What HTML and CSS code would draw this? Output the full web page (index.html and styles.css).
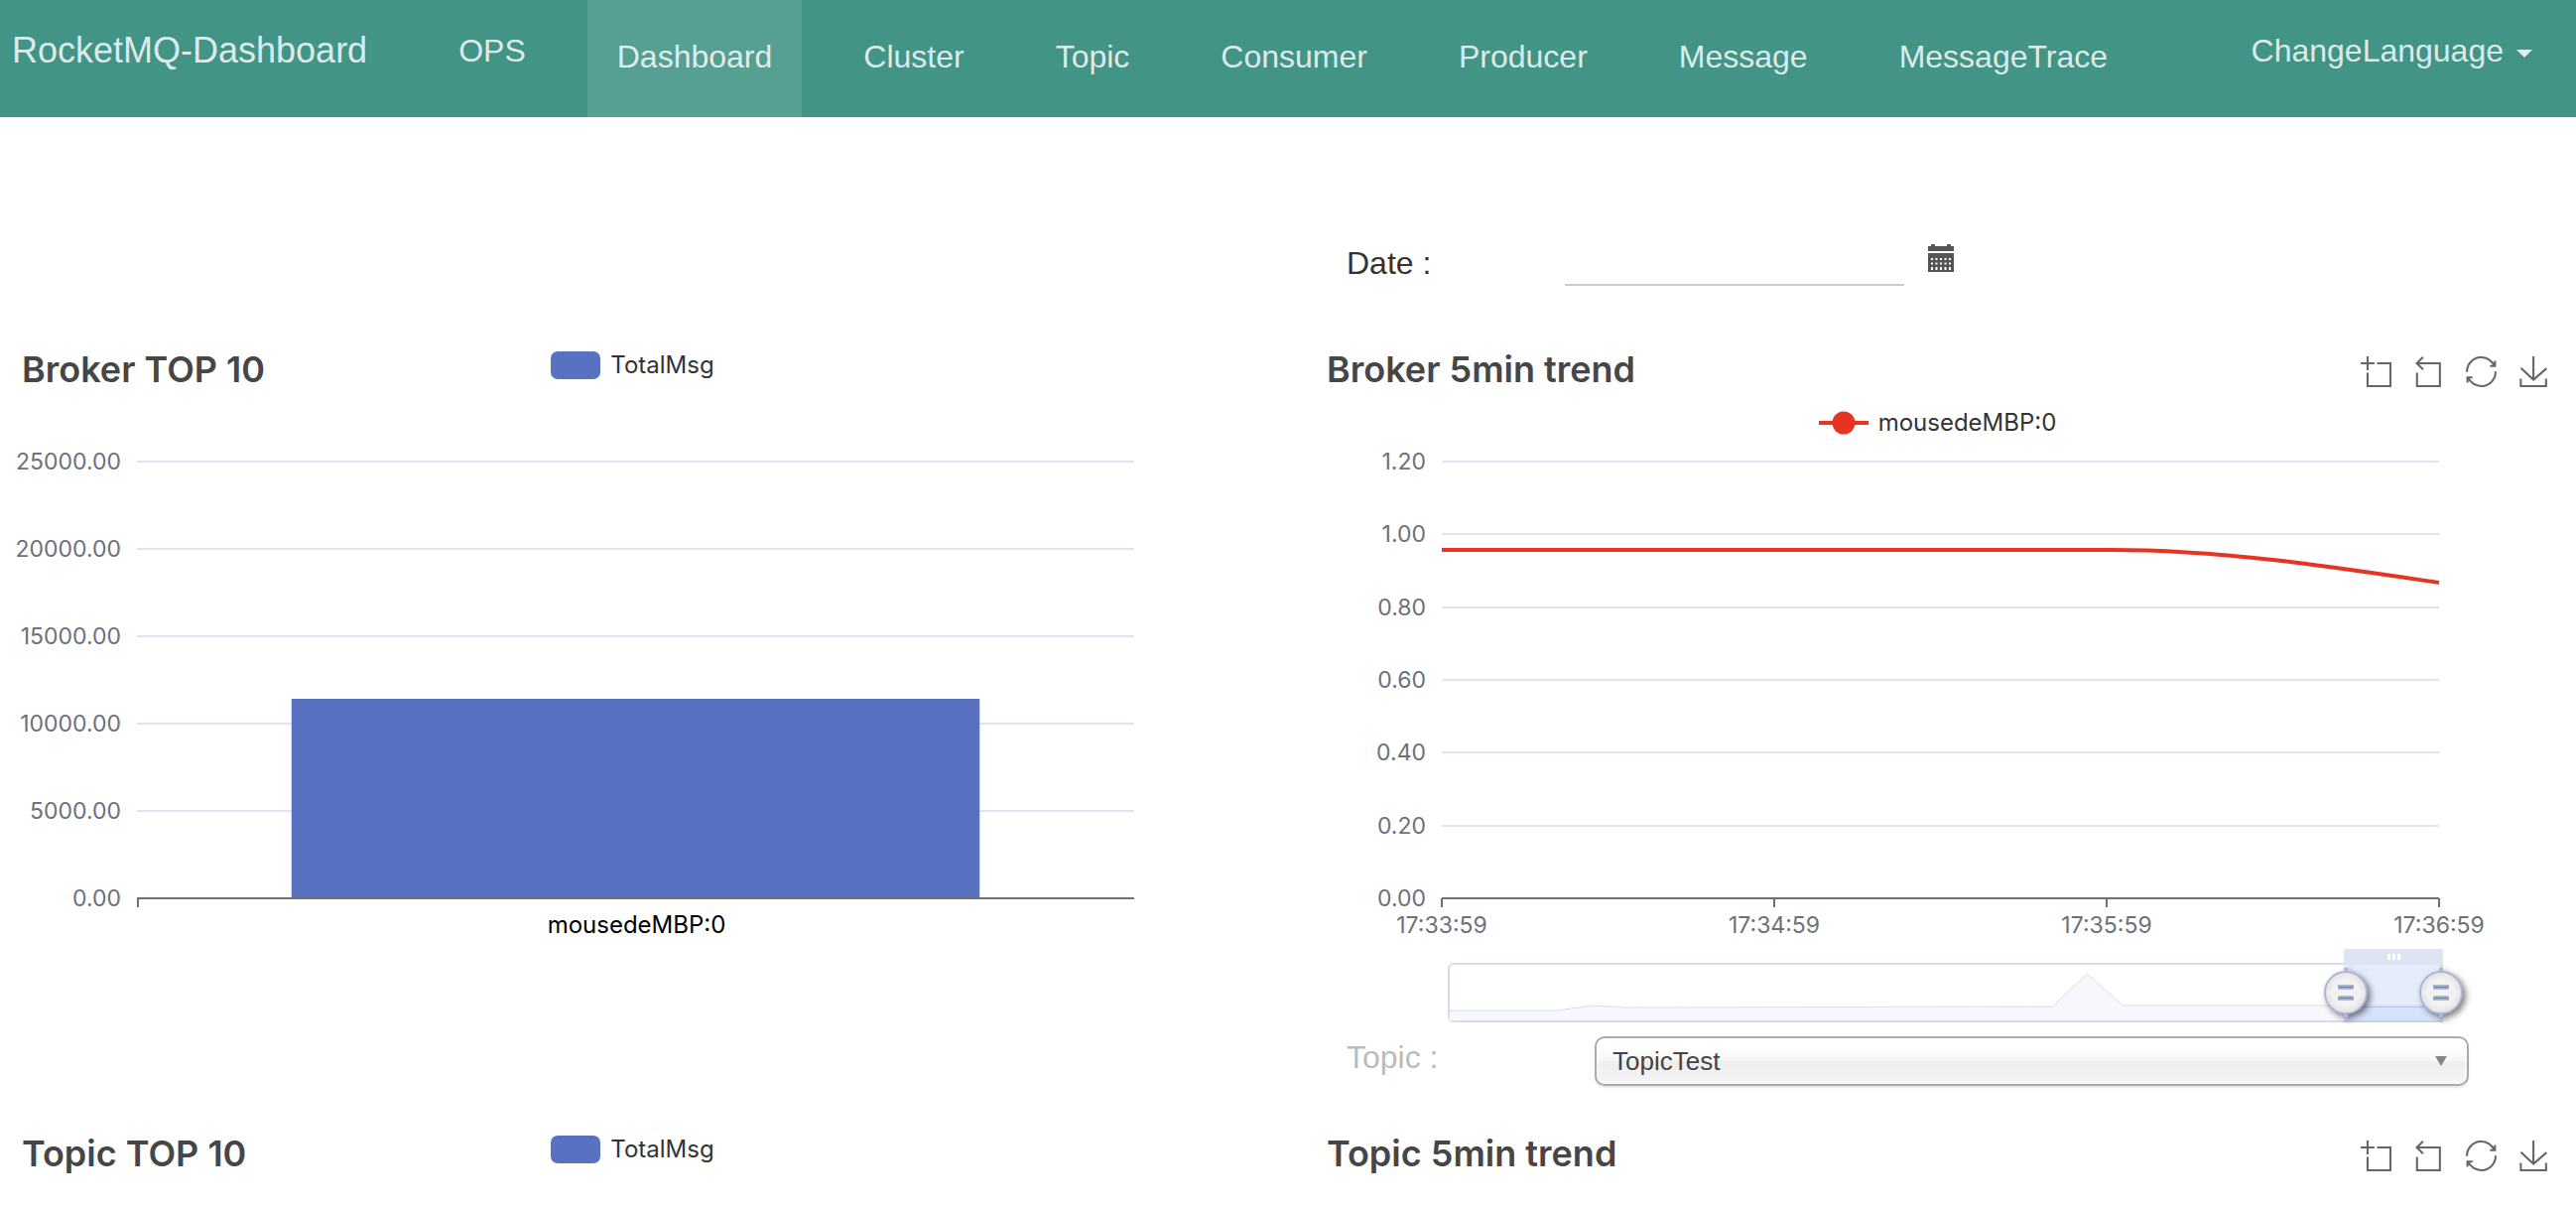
FILE: index.html
```html
<!DOCTYPE html>
<html lang="en">
<head>
<meta charset="utf-8">
<title>RocketMQ-Dashboard</title>
<link rel="stylesheet" href="styles.css">
</head>
<body>
<svg class="sprite" aria-hidden="true">
  <symbol id="tool-zoom" viewBox="0 0 58 58"><path d="M0,13.5h26.9 M13.5,26.9V0 M32.1,13.5H58V58H13.5 V32.1"/></symbol>
  <symbol id="tool-back" viewBox="3 0 58 58"><path d="M22,1.4L9.9,13.5l12.3,12.3 M10.3,13.5H54.9v44.6 H10.3v-26"/></symbol>
  <symbol id="tool-restore" viewBox="0 0 58 58"><path d="M47,18.9h9.8V8.7 M56.3,20.1 C52.1,9,40.5,0.6,26.8,2.1C12.6,3.7,1.6,16.2,2.1,30.6 M13,41.1H3.1v10.2 M3.7,39.9c4.2,11.1,15.8,19.5,29.5,18 c14.2-1.6,25.2-14.1,24.7-28.5"/></symbol>
  <symbol id="tool-save" viewBox="0 0 58 58"><path d="M4.7,22.9L29.3,45.5L54.7,23.4M4.6,43.6L4.6,58L53.8,58L53.8,43.6M29.2,45.1L29.2,0"/></symbol>
</svg>

<nav class="navbar">
  <a class="brand" href="#">RocketMQ-Dashboard</a>
  <a class="ops" href="#">OPS</a>
  <div class="menu">
    <a class="menu-item active" href="#">Dashboard</a>
    <a class="menu-item" href="#">Cluster</a>
    <a class="menu-item" href="#">Topic</a>
    <a class="menu-item" href="#">Consumer</a>
    <a class="menu-item" href="#">Producer</a>
    <a class="menu-item" href="#">Message</a>
    <a class="menu-item" href="#">MessageTrace</a>
  </div>
  <button class="language" type="button">ChangeLanguage<span class="caret"></span></button>
</nav>

<main class="page">
  <div class="field date-field">
    <label class="field-label date-label" for="date">Date :</label>
    <input class="date-input" id="date" type="text">
    <button class="calendar" type="button" aria-label="Open calendar">
      <svg width="26" height="28" viewBox="0 0 26 28" fill="#555">
        <path d="M0 2h3V1a1 1 0 0 1 1-1h2a1 1 0 0 1 1 1v1h12V1a1 1 0 0 1 1-1h2a1 1 0 0 1 1 1v1h3v5H0z"/>
        <path fill-rule="evenodd" d="M0 9h26v19H0z M3 14v2h2v-2z M7.500 14v2h2v-2z M12 14v2h2v-2z M16.500 14v2h2v-2z M21 14v2h2v-2z M3 18.500v2h2v-2z M7.500 18.500v2h2v-2z M12 18.500v2h2v-2z M16.500 18.500v2h2v-2z M21 18.500v2h2v-2z M3 23v3h2v-3z M7.500 23v3h2v-3z M12 23v3h2v-3z M16.500 23v3h2v-3z M21 23v3h2v-3z"/>
      </svg>
    </button>
  </div>

  <section class="chart chart-left">
    <header class="chart-head">
      <h2 class="chart-title">Broker TOP 10</h2>
      <div class="legend"><span class="swatch"></span>TotalMsg</div>
    </header>
    <div class="chart-body">
      <div class="y-axis"><span>25000.00</span><span>20000.00</span><span>15000.00</span><span>10000.00</span><span>5000.00</span><span>0.00</span></div>
      <svg class="plot" viewBox="0 0 1000 440" preserveAspectRatio="none">
        <path class="grid-line" d="M0 0H1000M0 88H1000M0 176H1000M0 264H1000M0 352H1000"/>
        <rect class="bar" x="155" y="239" width="690" height="201"/>
        <path class="axis-line" d="M0 440H1000"/>
      </svg>
    </div>
    <div class="x-axis">
      <span class="tick"></span>
      <span class="category-name">mousedeMBP:0</span>
    </div>
  </section>

  <section class="chart chart-right">
    <header class="chart-head">
      <h2 class="chart-title">Broker 5min trend</h2>
      <div class="toolbox">
        <button type="button" aria-label="Zoom"><svg><use href="#tool-zoom"/></svg></button>
        <button type="button" aria-label="Zoom reset"><svg><use href="#tool-back"/></svg></button>
        <button type="button" aria-label="Restore"><svg><use href="#tool-restore"/></svg></button>
        <button type="button" aria-label="Save as image"><svg><use href="#tool-save"/></svg></button>
      </div>
      <div class="legend legend-below">
        <svg width="50" height="24" viewBox="0 0 50 24"><path d="M0 12H50" stroke="#e83323" stroke-width="4"/><circle cx="25" cy="12" r="11.500" fill="#e83323"/></svg>mousedeMBP:0
      </div>
    </header>
    <div class="chart-body">
      <div class="y-axis"><span>1.20</span><span>1.00</span><span>0.80</span><span>0.60</span><span>0.40</span><span>0.20</span><span>0.00</span></div>
      <svg class="plot" viewBox="0 0 1005 440" preserveAspectRatio="none">
        <path class="grid-line" d="M0 0H1005M0 73H1005M0 147H1005M0 220H1005M0 293H1005M0 367H1005"/>
        <path class="axis-line" d="M0 440H1005"/>
        <path class="trend" d="M0 89H674C787 89 897 106 1005 122"/>
      </svg>
    </div>
    <div class="x-axis">
      <div class="x-label"><span class="tick"></span>17:33:59</div>
      <div class="x-label"><span class="tick"></span>17:34:59</div>
      <div class="x-label"><span class="tick"></span>17:35:59</div>
      <div class="x-label"><span class="tick"></span>17:36:59</div>
    </div>
    <div class="zoom">
      <svg class="zoom-shadow" viewBox="0 0 1000 56" preserveAspectRatio="none">
        <path class="zoom-area" d="M0 46H108L143 41L178 43L608 42L643 9L679 41L1000 41V56H0z"/>
        <path class="zoom-line" d="M0 46H108L143 41L178 43L608 42L643 9L679 41L1000 41"/>
      </svg>
      <div class="zoom-window">
        <div class="zoom-grip"><i></i><i></i><i></i></div>
        <div class="zoom-data"></div>
      </div>
      <input class="zoom-handle" type="range" aria-label="Start of range" min="0" max="1000" value="904">
      <input class="zoom-handle" type="range" aria-label="End of range" min="0" max="1000" value="1000">
    </div>
  </section>

  <div class="field topic-field">
    <label class="field-label topic-label" for="topic">Topic :</label>
    <select class="topic-select" id="topic"><option>TopicTest</option></select>
  </div>

  <section class="chart chart-left">
    <header class="chart-head">
      <h2 class="chart-title">Topic TOP 10</h2>
      <div class="legend"><span class="swatch"></span>TotalMsg</div>
    </header>
  </section>
  <section class="chart chart-right">
    <header class="chart-head">
      <h2 class="chart-title">Topic 5min trend</h2>
      <div class="toolbox">
        <button type="button" aria-label="Zoom"><svg><use href="#tool-zoom"/></svg></button>
        <button type="button" aria-label="Zoom reset"><svg><use href="#tool-back"/></svg></button>
        <button type="button" aria-label="Restore"><svg><use href="#tool-restore"/></svg></button>
        <button type="button" aria-label="Save as image"><svg><use href="#tool-save"/></svg></button>
      </div>
    </header>
  </section>
</main>
</body>
</html>
```
FILE: styles.css
```css
* { box-sizing: border-box; }

body {
  margin: 0;
  background: #fff;
  color: #333;
  font: 24px "Liberation Sans", Arial, sans-serif;
}

button {
  margin: 0;
  padding: 0;
  border: 0;
  background: none;
  color: inherit;
  font: inherit;
}

.sprite { display: none; }

/* Navigation */
.navbar {
  display: flex;
  min-height: 118px;
  padding: 0 44px 0 12px;
  background: #429487;
  color: rgba(255, 255, 255, 0.84);
  font-size: 32px;
  line-height: 102px;
  white-space: nowrap;
}
.navbar a { color: inherit; text-decoration: none; }
.brand { font-size: 36px; }
.ops { margin-left: 92px; }
.menu {
  display: flex;
  gap: 32px;
  margin-left: 62px;
  line-height: 114px;
}
.menu-item { padding: 0 30px; }
.menu-item.active { background: #55a093; }
.language {
  display: flex;
  align-items: center;
  gap: 13px;
  height: 102px;
  margin-left: auto;
}
.caret {
  margin-top: 6px;
  border: 8px solid transparent;
  border-top-color: currentColor;
  border-bottom: 0;
}

/* Page grid: ranking charts on the left, trends on the right */
.page {
  display: grid;
  grid-template-columns: 1fr 1fr;
  column-gap: 64px;
  padding: 126px 16px 0 14px;
}
.chart-left { grid-column: 1; }
.chart-right { grid-column: 2; }

.field {
  grid-column: 2;
  display: flex;
  align-items: flex-start;
  padding-left: 28px;
}
.field-label {
  flex: none;
  font-size: 32px;
  line-height: 42px;
}
.date-field { padding-bottom: 52px; }
.date-label { width: 220px; }
.date-input {
  width: 342px;
  height: 44px;
  padding: 0;
  border: 0;
  border-bottom: 2px solid #ccc;
  background: none;
  font: inherit;
}
.calendar { display: block; margin: 2px 0 0 24px; }
.calendar svg { display: block; }
.topic-field { padding-right: 92px; padding-bottom: 36px; }
.topic-label { width: 250px; color: #bbb; }
.topic-select {
  flex: 1;
  height: 50px;
  padding: 0 16px;
  border: 2px solid #aaa;
  border-radius: 10px;
  appearance: none;
  background:
    url("data:image/svg+xml,%3Csvg xmlns='http://www.w3.org/2000/svg' width='12' height='10'%3E%3Cpath d='M0 0H12L6 10z' fill='%23888'/%3E%3C/svg%3E") no-repeat right 20px center,
    linear-gradient(#fff 20%, #f6f6f6 50%, #eee 52%, #f4f4f4 100%);
  box-shadow: inset 0 0 6px #fff, 0 2px 2px rgba(0, 0, 0, 0.1);
  color: #444;
  font: 26px "Liberation Sans", Arial, sans-serif;
}

/* Charts */
.chart { font: 23px Inter, "Liberation Sans", sans-serif; }
.chart-head {
  display: grid;
  grid-template-columns: 1fr auto 1fr;
  align-items: start;
  align-content: start;
  padding: 12px 12px 0 8px;
}
.chart-title {
  margin: 0;
  color: #464646;
  font-size: 36px;
  font-weight: 600;
  line-height: 40px;
  white-space: nowrap;
}
.legend {
  display: flex;
  align-items: center;
  gap: 10px;
  margin-top: 2px;
  font-size: 24px;
  line-height: 28px;
}
.legend-below {
  grid-column: 1 / -1;
  justify-self: center;
  margin-top: 20px;
}
.swatch {
  width: 50px;
  height: 28px;
  border-radius: 7px;
  background: #5871c0;
}
.toolbox {
  grid-column: 3;
  justify-self: end;
  display: flex;
  gap: 23px;
  margin-top: 7px;
}
.toolbox button, .toolbox svg {
  display: block;
  width: 30px;
  height: 30px;
  overflow: visible;
}
.sprite symbol { overflow: visible; }
.toolbox svg { fill: none; stroke: #666; stroke-width: 4; }

.chart-head:not(:last-child) { min-height: 125px; }
.chart-body {
  display: flex;
  height: 440px;
  padding-right: 122px;
}
.y-axis {
  display: flex;
  flex: none;
  flex-direction: column;
  justify-content: space-between;
  width: 124px;
  padding-right: 16px;
  color: #6e7079;
  line-height: 0;
  text-align: right;
}
.y-axis span { height: 0; }
.plot {
  flex: 1;
  min-width: 0;
  height: 440px;
  overflow: visible;
}
.plot path {
  fill: none;
  stroke-width: 2;
  vector-effect: non-scaling-stroke;
}
.plot .grid-line { stroke: #e0e4ec; }
.plot .axis-line { stroke: #6e7079; }
.plot .trend { stroke: #e83323; stroke-width: 4; }
.bar { fill: #5871c0; }

.x-axis {
  display: flex;
  justify-content: space-between;
  height: 41px;
  padding: 0 122px 0 124px;
  color: #6e7079;
  line-height: 28px;
}
.x-label {
  display: flex;
  flex-direction: column;
  align-items: center;
  width: 0;
  white-space: nowrap;
}
.tick {
  flex: none;
  width: 2px;
  height: 9px;
  margin-bottom: 4px;
  background: #6e7079;
}
.category-name {
  flex: 1;
  padding-top: 13px;
  color: #000;
  font-size: 24px;
  text-align: center;
}

/* Range slider under the trend chart */
.zoom {
  position: relative;
  height: 60px;
  margin: 24px 118px 14px 130px;
  border: 2px solid #d5dbe8;
  border-radius: 6px;
}
.zoom-shadow { display: block; width: 100%; height: 56px; }
.zoom-area { fill: #f6f8fd; }
.zoom-line {
  fill: none;
  stroke: #d8dde9;
  stroke-width: 1;
  vector-effect: non-scaling-stroke;
}
.zoom-window {
  position: absolute;
  top: -16px;
  right: -2px;
  bottom: -2px;
  display: flex;
  flex-direction: column;
  justify-content: space-between;
  width: 10%;
  background: rgba(190, 210, 250, 0.4);
}
.zoom-grip {
  display: flex;
  justify-content: center;
  gap: 2px;
  height: 16px;
  padding-top: 5px;
  border-radius: 4px 4px 0 0;
  background: #dee4f1;
}
.zoom-grip i { width: 3px; height: 6px; background: #fff; }
.zoom-data {
  height: 16px;
  border-top: 1px solid #b4c3e6;
  border-bottom: 2px solid #c6d2ea;
  background: #d6e1fa;
}
.zoom-handle {
  position: absolute;
  top: 1px;
  left: -24px;
  width: calc(100% + 48px);
  height: 54px;
  margin: 0;
  appearance: none;
  background: none;
  pointer-events: none;
}
.zoom-handle::-webkit-slider-thumb {
  width: 48px;
  height: 54px;
  appearance: none;
  background: url("data:image/svg+xml,%3Csvg xmlns='http://www.w3.org/2000/svg' width='48' height='54' viewBox='0 0 48 54'%3E%3Cdefs%3E%3CradialGradient id='g'%3E%3Cstop offset='.6' stop-color='%23f3f3f3'/%3E%3Cstop offset='1' stop-color='%23e2e2e2'/%3E%3C/radialGradient%3E%3C/defs%3E%3Cpath d='M22 2h4v50h-4z' fill='%23acb8d1'/%3E%3Ccircle cx='24' cy='27' r='21' fill='url(%23g)' stroke='%23acb8d1' stroke-width='2'/%3E%3Cpath d='M16 19h16v5H16zM16 30h16v5H16z' fill='%23acb8d1'/%3E%3Cpath d='M17 21.500h14M17 32.500h14' stroke='%236b7893' stroke-width='1'/%3E%3C/svg%3E") center / 48px 54px no-repeat;
  filter: drop-shadow(3px 3px 3px rgba(0, 0, 0, 0.5));
  pointer-events: auto;
}
```
